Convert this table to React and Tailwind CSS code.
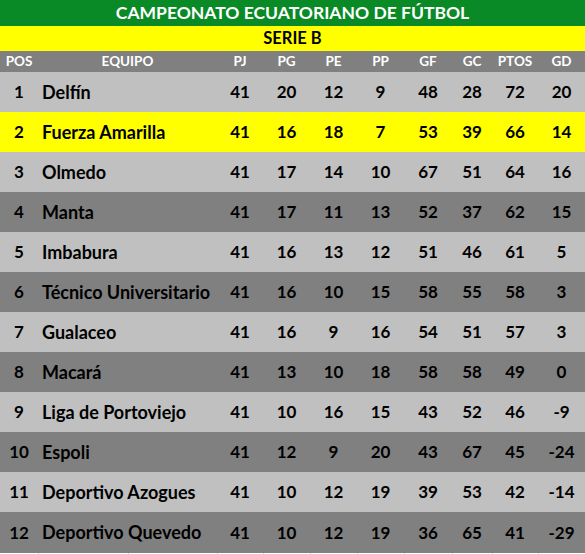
import React from "react";

const rows = [
  [1, "Delfín", 41, 20, 12, 9, 48, 28, 72, 20],
  [2, "Fuerza Amarilla", 41, 16, 18, 7, 53, 39, 66, 14],
  [3, "Olmedo", 41, 17, 14, 10, 67, 51, 64, 16],
  [4, "Manta", 41, 17, 11, 13, 52, 37, 62, 15],
  [5, "Imbabura", 41, 16, 13, 12, 51, 46, 61, 5],
  [6, "Técnico Universitario", 41, 16, 10, 15, 58, 55, 58, 3],
  [7, "Gualaceo", 41, 16, 9, 16, 54, 51, 57, 3],
  [8, "Macará", 41, 13, 10, 18, 58, 58, 49, 0],
  [9, "Liga de Portoviejo", 41, 10, 16, 15, 43, 52, 46, -9],
  [10, "Espoli", 41, 12, 9, 20, 43, 67, 45, -24],
  [11, "Deportivo Azogues", 41, 10, 12, 19, 39, 53, 42, -14],
  [12, "Deportivo Quevedo", 41, 10, 12, 19, 36, 65, 41, -29],
];

const heads = ["POS", "EQUIPO", "PJ", "PG", "PE", "PP", "GF", "GC", "PTOS", "GD"];

const cols = "grid grid-cols-[38px_179px_46px_47px_47px_47px_48px_40px_46px_47px]";

export default function App() {
  return (
    <div
      className="w-[585px] h-[554px] bg-white overflow-hidden font-bold"
      style={{ fontFamily: "Lato, 'Open Sans', sans-serif" }}
    >
      <div className="h-[26px] bg-[#098a26] text-white text-[17.5px] flex items-center justify-center">
        CAMPEONATO ECUATORIANO DE FÚTBOL
      </div>
      <div className="h-[25px] bg-[#ffff00] text-black text-[16.5px] flex items-center justify-center">
        SERIE B
      </div>
      <div className={`${cols} h-[21px] bg-[#808080] text-white text-[13.5px] items-center text-center`}>
        {heads.map((h) => (
          <div key={h}>{h}</div>
        ))}
      </div>
      {rows.map((r, i) => {
        const bg = i === 1 ? "bg-[#ffff00]" : i % 2 === 0 ? "bg-[#c0c0c0]" : "bg-[#808080]";
        const h = i === rows.length - 1 ? "h-[41px]" : "h-[40px]";
        return (
          <div key={r[0]} className={`${cols} ${h} ${bg} text-black text-[17px] items-center text-center`}>
            {r.map((v, j) => (
              <div key={j} className={j === 1 ? "text-left pl-[4px] whitespace-nowrap text-[18px]" : ""}>
                {v}
              </div>
            ))}
          </div>
        );
      })}
      <div className="grid grid-cols-[38px_90px_89px_46px_47px_47px_47px_48px_40px_46px_47px] h-[1px]">
        {Array.from({ length: 11 }).map((_, i) => (
          <div key={i} className={i === 0 ? "" : "border-l border-[#d4d4d4]"} />
        ))}
      </div>
    </div>
  );
}
